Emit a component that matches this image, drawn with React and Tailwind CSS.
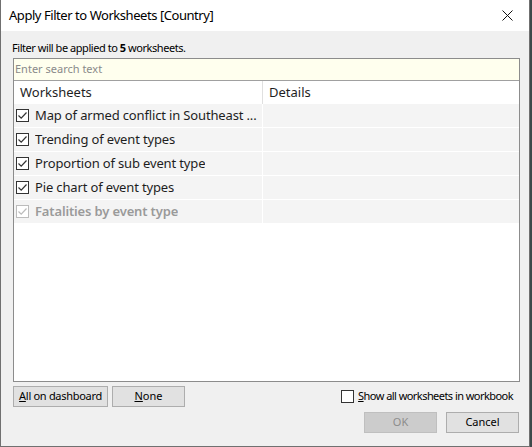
import React from 'react';

const font = { fontFamily: '"Noto Sans", "Open Sans", sans-serif' };

function Check({ checked, disabled }) {
  return (
    <span
      className={`inline-flex h-[13px] w-[13px] shrink-0 items-center justify-center border bg-white ${
        disabled ? 'border-[#bcbcbc]' : 'border-[#333333]'
      }`}
    >
      {checked && (
        <svg width="11" height="11" viewBox="0 0 11 11">
          <path
            d="M1.5 5.5 L4.2 8.2 L9.5 2.5"
            fill="none"
            stroke={disabled ? '#bcbcbc' : '#333333'}
            strokeWidth="1.2"
          />
        </svg>
      )}
    </span>
  );
}

const sheets = [
  { name: 'Map of armed conflict in Southeast ...', on: true },
  { name: 'Trending of event types', on: true },
  { name: 'Proportion of sub event type', on: true },
  { name: 'Pie chart of event types', on: true },
  { name: 'Fatalities by event type', on: true, disabled: true },
];

export default function App() {
  return (
    <div className="flex h-[447px] w-[532px] bg-[#3c4a4a]" style={font}>
      <div className="flex h-[447px] w-[530px] flex-col border-x border-b border-[#707070] bg-[#f0f0f0]">
        {/* title bar */}
        <div className="flex h-[31px] shrink-0 items-center justify-between bg-white pl-[8px] pr-[16px]">
          <span className="text-[13px] tracking-[-0.45px] text-black">Apply Filter to Worksheets [Country]</span>
          <svg width="11" height="11" viewBox="0 0 11 11">
            <path d="M0.5 0.5 L10.5 10.5 M10.5 0.5 L0.5 10.5" stroke="#111" strokeWidth="1" />
          </svg>
        </div>

        <div className="flex flex-1 flex-col pl-[11px] pr-[9px]">
          <div className="mt-[9px] whitespace-nowrap text-[11px] leading-[16px] tracking-[-0.45px] text-black">
            Filter will be applied to <b>5</b> worksheets.
          </div>

          <div className="ml-[1px] mt-[2px] flex h-[324px] flex-col border border-[#8c8c8c] bg-white">
            <div className="flex h-[22px] items-center border-b border-[#a0a0a0] bg-[#ffffee] px-[1px] text-[11px] text-[#8a8a8a]">
              Enter search text
            </div>
            <div className="flex h-[23px] text-[13px] text-[#1e1e1e]">
              <div className="flex w-[249px] items-center border-r border-[#e0e0e0] pl-[6px]">Worksheets</div>
              <div className="flex flex-1 items-center pl-[6px]">Details</div>
            </div>
            {sheets.map((s) => (
              <div key={s.name} className="flex h-[24px] border-b border-white bg-[#f4f4f4]">
                <div className="flex w-[249px] items-center gap-[6px] border-r border-white pl-[2px] pr-[2px]">
                  <Check checked={s.on} disabled={s.disabled} />
                  <span
                    className={`truncate text-[13px] tracking-[-0.15px] ${
                      s.disabled ? 'font-semibold text-[#9a9a9a]' : 'text-[#1e1e1e]'
                    }`}
                  >
                    {s.name}
                  </span>
                </div>
                <div className="flex-1" />
              </div>
            ))}
          </div>

          <div className="mt-[4px] flex items-center">
            <button className="ml-[1px] h-[21px] w-[95px] whitespace-nowrap border border-[#adadad] bg-[#e1e1e1] text-[11px] tracking-[-0.3px] text-black">
              <u>A</u>ll on dashboard
            </button>
            <button className="ml-[4px] h-[21px] w-[73px] border border-[#adadad] bg-[#e1e1e1] text-[11px] text-black">
              <u>N</u>one
            </button>
            <div className="ml-auto mr-[7px] flex items-center gap-[4px] whitespace-nowrap text-[11px] tracking-[-0.55px] text-black">
              <span className="inline-flex h-[13px] w-[13px] border border-[#333333] bg-white" />
              <span>
                <u>S</u>how all worksheets in workbook
              </span>
            </div>
          </div>

          <div className="mt-[5px] flex justify-end gap-[9px] pr-[1px]">
            <button className="h-[21px] w-[73px] border border-[#bfbfbf] bg-[#cccccc] text-[11px] text-[#8d8d8d]">
              OK
            </button>
            <button className="h-[21px] w-[73px] border border-[#adadad] bg-[#e1e1e1] text-[11px] text-black">
              Cancel
            </button>
          </div>
        </div>
      </div>
    </div>
  );
}
